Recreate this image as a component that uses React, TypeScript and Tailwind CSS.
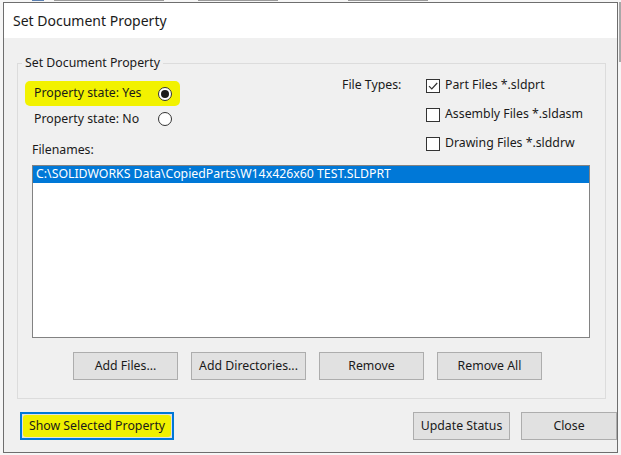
const fileTypes = [
  { label: "Part Files *.sldprt", checked: true },
  { label: "Assembly Files *.sldasm", checked: false },
  { label: "Drawing Files *.slddrw", checked: false },
];

const listButtons = [
  { label: "Add Files...", w: "w-[105px]" },
  { label: "Add Directories...", w: "w-[115px]" },
  { label: "Remove", w: "w-[105px]" },
  { label: "Remove All", w: "w-[105px]" },
];

function Radio({ checked }: { checked?: boolean }) {
  return (
    <span className="flex h-[14px] w-[14px] shrink-0 items-center justify-center rounded-full border border-[#333333] bg-white">
      {checked && <span className="h-[8px] w-[8px] rounded-full bg-[#1a1a1a]" />}
    </span>
  );
}

function Checkbox({ checked }: { checked?: boolean }) {
  return (
    <span className="flex h-[14px] w-[14px] shrink-0 items-center justify-center border border-[#333333] bg-white">
      {checked && (
        <svg viewBox="0 0 12 12" className="h-[12px] w-[12px]">
          <path d="M2 6.2 L4.8 9 L10.2 3" fill="none" stroke="#333333" strokeWidth="1.2" />
        </svg>
      )}
    </span>
  );
}

function Button({ label, className = "" }: { label: string; className?: string }) {
  return (
    <button className={`flex h-[28px] items-center justify-center border border-[#adadad] bg-[#e1e1e1] text-[12.3px] text-[#1a1a1a] ${className}`}>
      {label}
    </button>
  );
}

export default function App() {
  return (
    <div className="flex h-[455px] w-[621px] flex-col overflow-hidden bg-[#f6f6f6] font-['Noto_Sans',sans-serif] text-[12.3px] text-[#1a1a1a]">
      {/* sliver of the window behind */}
      <div className="flex h-[2px] shrink-0 gap-[10px] pl-[32px]">
        <span className="h-[1px] w-[12px] bg-[#5a7fb0]" />
        <span className="h-[1px] w-[110px] bg-[#9a9a9a]" />
        <span className="ml-[24px] h-[1px] w-[80px] bg-[#9a9a9a]" />
        <span className="ml-[60px] h-[1px] w-[80px] bg-[#9a9a9a]" />
      </div>

      <div className="flex">
        <div className="ml-[3px] flex h-[451px] w-[615px] flex-col border border-[#6e6e6e]">
          {/* title bar */}
          <div className="flex h-[35px] shrink-0 items-center bg-white pl-[9px] text-[14px] leading-none">
            Set Document Property
          </div>

          {/* body */}
          <div className="flex flex-1 flex-col bg-[#f0f0f0]">
            <fieldset className="ml-[13px] mt-[17px] h-[344px] w-[589px] border border-[#dcdcdc] px-[14px]">
              <legend className="-ml-[10px] px-[3px] leading-[16px]">Set Document Property</legend>

              <div className="flex h-[71px] items-start">
                {/* radios */}
                <div className="mt-[10px] flex w-[310px] flex-col">
                  <div className="-ml-[7px] flex h-[25px] w-[155px] items-center rounded-[5px] bg-[#f2f200] pl-[9px] pr-[8px]">
                    <span>Property state: Yes</span>
                    <span className="ml-auto">
                      <Radio checked />
                    </span>
                  </div>
                  <div className="-ml-[7px] flex h-[26px] w-[155px] items-center pl-[9px] pr-[8px]">
                    <span>Property state: No</span>
                    <span className="ml-auto">
                      <Radio />
                    </span>
                  </div>
                </div>

                {/* file types */}
                <div className="flex h-[29px] w-[84px] items-center">File Types:</div>
                <div className="flex flex-col">
                  {fileTypes.map((f) => (
                    <div key={f.label} className="flex h-[29px] items-center gap-[5px]">
                      <Checkbox checked={f.checked} />
                      <span>{f.label}</span>
                    </div>
                  ))}
                </div>
              </div>

              <div className="flex h-[16px] items-center">Filenames:</div>

              <div className="mt-[7px] h-[173px] w-[558px] border border-[#828282] bg-white">
                <div className="flex h-[17px] items-center bg-[#0078d7] pl-[3px] text-white">
                  C:\SOLIDWORKS Data\CopiedParts\W14x426x60 TEST.SLDPRT
                </div>
              </div>

              <div className="ml-[41px] mt-[14px] flex gap-[13px]">
                {listButtons.map((b) => (
                  <Button key={b.label} label={b.label} className={b.w} />
                ))}
              </div>
            </fieldset>

            {/* bottom row */}
            <div className="mt-[13px] flex pl-[16px]">
              <button className="flex h-[28px] w-[154px] items-center justify-center border-2 border-[#0078d7] bg-[#e1e1e1] p-[1px] text-[12.3px]">
                <span className="flex h-full w-full items-center justify-center rounded-[3px] bg-[#f0f000]">
                  Show Selected Property
                </span>
              </button>
              <Button label="Update Status" className="ml-auto w-[97px]" />
              <Button label="Close" className="ml-[11px] w-[96px]" />
            </div>
          </div>
        </div>
        <div className="ml-[1px] h-[60px] w-[2px] bg-[#a8a8a8]" />
      </div>
    </div>
  );
}
